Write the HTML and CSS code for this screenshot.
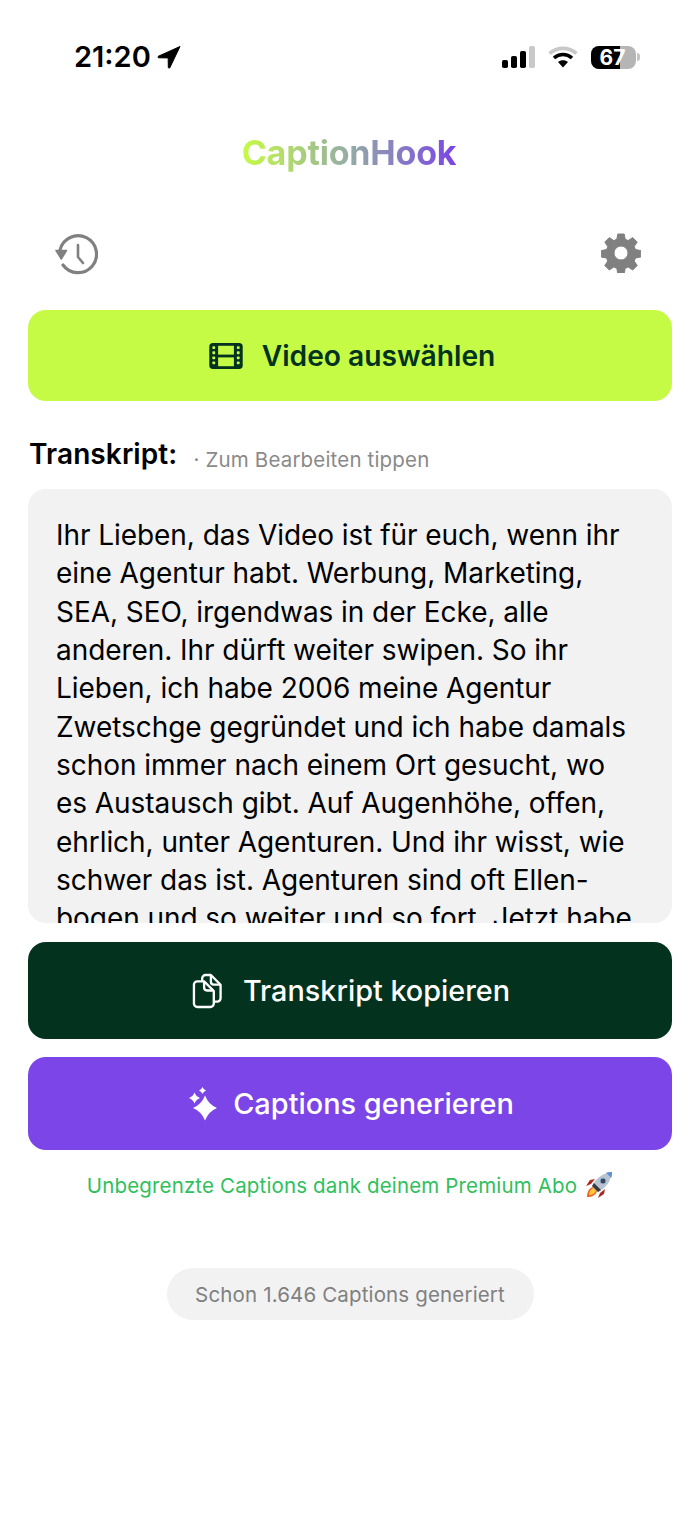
FILE: index.html
```html
<!DOCTYPE html>
<html lang="de">
<head>
<meta charset="utf-8">
<title>CaptionHook</title>
<link rel="stylesheet" href="styles.css">
</head>
<body>
<div class="status">
  <div class="status-left">
    <span class="time">21:20</span>
    <svg class="loc" viewBox="0 0 24 24"><path d="M23 1.500 1.500 11.200c-.9.4-.6 1.600.3 1.600l9.400.1.1 9.400c0 .9 1.200 1.200 1.600.3L23 1.500z" fill="#000" stroke="#000" stroke-width="1" stroke-linejoin="round"/></svg>
  </div>
  <div class="status-right">
    <svg class="signal" viewBox="0 0 34 22"><rect x="0" y="14" width="6" height="8" rx="1.800" fill="#000"/><rect x="9" y="10" width="6" height="12" rx="1.800" fill="#000"/><rect x="18" y="5" width="6" height="17" rx="1.800" fill="#000"/><rect x="27" y="0" width="6" height="22" rx="1.800" fill="#c9c9c9"/></svg>
    <svg class="wifi" viewBox="0 0 30 22"><path d="M1.500 7.500C9 .6 21 .6 28.500 7.500" fill="none" stroke="#c8c8c8" stroke-width="3.600"/><path d="M6 12c5.200-4.600 12.800-4.600 18 0" fill="none" stroke="#000" stroke-width="3.600"/><path d="M10 16c3-2.300 7-2.300 10 0l-5 5.500z" fill="#000"/></svg>
    <div class="battery">
      <div class="batt-body"><div class="batt-fill"></div><span class="batt-num">67</span></div>
      <div class="batt-cap"></div>
    </div>
  </div>
</div>

<div class="logo-row"><span class="logo">CaptionHook</span></div>

<div class="toolbar">
  <svg class="hist" viewBox="0 0 44 44"><path d="M6 18A18.500 18.500 0 1 1 9 33" fill="none" stroke="#808080" stroke-width="3.200" stroke-linecap="round"/><path d="M2 18.500h10.500l-5.200 8.500z" fill="#808080" stroke="#808080" stroke-linejoin="round" stroke-width="1.500"/><path d="M24 13v12l5 6" fill="none" stroke="#808080" stroke-width="2.600" stroke-linecap="round" stroke-linejoin="round"/></svg>
  <svg class="gear" viewBox="0 0 40 40"><path fill="#808080" fill-rule="evenodd" d="M16.800 1h6.400l1 5.300 3 1.300 4.500-3 4.500 4.500-3 4.500 1.300 3 5.300 1v6.400l-5.300 1-1.300 3 3 4.500-4.500 4.500-4.500-3-3 1.300-1 5.300h-6.400l-1-5.300-3-1.300-4.500 3-4.500-4.500 3-4.500-1.300-3-5.300-1v-6.400l5.300-1 1.300-3-3-4.500 4.500-4.500 4.500 3 3-1.300zM20 13a7 7 0 1 0 0 14 7 7 0 0 0 0-14z" stroke="#808080" stroke-width="1" stroke-linejoin="round"/></svg>
</div>

<button class="btn btn-lime">
  <svg class="film" viewBox="0 0 36 28"><rect x="0" y="0" width="36" height="28" rx="4" fill="#03331f"/><rect x="9.500" y="3" width="17" height="9.500" fill="#c6fb45"/><rect x="9.500" y="15.500" width="17" height="9.500" fill="#c6fb45"/><g fill="#c6fb45"><rect x="3.300" y="3.500" width="3" height="3" rx=".8"/><rect x="3.300" y="9" width="3" height="3" rx=".8"/><rect x="3.300" y="14.500" width="3" height="3" rx=".8"/><rect x="3.300" y="20" width="3" height="3" rx=".8"/><rect x="29.700" y="3.500" width="3" height="3" rx=".8"/><rect x="29.700" y="9" width="3" height="3" rx=".8"/><rect x="29.700" y="14.500" width="3" height="3" rx=".8"/><rect x="29.700" y="20" width="3" height="3" rx=".8"/></g></svg>
  <span>Video auswählen</span>
</button>

<div class="label-row">
  <span class="label">Transkript:</span>
  <span class="hint">· Zum Bearbeiten tippen</span>
</div>

<div class="transcript">
  <p>Ihr Lieben, das Video ist für euch, wenn ihr<br>eine Agentur habt. Werbung, Marketing,<br>SEA, SEO, irgendwas in der Ecke, alle<br>anderen. Ihr dürft weiter swipen. So ihr<br>Lieben, ich habe 2006 meine Agentur<br>Zwetschge gegründet und ich habe damals<br>schon immer nach einem Ort gesucht, wo<br>es Austausch gibt. Auf Augenhöhe, offen,<br>ehrlich, unter Agenturen. Und ihr wisst, wie<br>schwer das ist. Agenturen sind oft Ellen-<br>bogen und so weiter und so fort. Jetzt habe</p>
</div>

<button class="btn btn-dark">
  <svg class="copy" viewBox="0 0 32 36"><path d="M10.500 8V5a3.500 3.500 0 0 1 3.500-3.500h5.500L29.500 11.500v14a3.500 3.500 0 0 1-3.500 3.500h-3" fill="none" stroke="#fff" stroke-width="2.400" stroke-linejoin="round"/><path d="M19.500 2v6.500a3 3 0 0 0 3 3h6.500" fill="none" stroke="#fff" stroke-width="2.400"/><path d="M5.500 8h7l10 10v13a3.500 3.500 0 0 1-3.500 3.500H5.500A3.500 3.500 0 0 1 2 31V11.500A3.500 3.500 0 0 1 5.500 8z" fill="#03331f" stroke="#fff" stroke-width="2.400" stroke-linejoin="round"/><path d="M12.500 8.500v6a3 3 0 0 0 3 3h6.500" fill="none" stroke="#fff" stroke-width="2.400"/></svg>
  <span>Transkript kopieren</span>
</button>

<button class="btn btn-purple">
  <svg class="spark" viewBox="0 0 30 34"><path fill="#fff" d="M15 8.500Q18.500 17.500 27 21Q18.500 24.500 15 33.500Q11.500 24.500 3 21Q11.500 17.500 15 8.500z"/><path fill="#fff" d="M4.500 5.500Q6 9.500 10 11Q6 12.500 4.500 16.500Q3 12.500-1 11Q3 9.500 4.500 5.500z"/><path fill="#fff" d="M12.500 0Q13.300 2.300 16 3.500Q13.300 4.700 12.500 7Q11.700 4.700 9 3.500Q11.700 2.300 12.500 0z"/></svg>
  <span>Captions generieren</span>
</button>

<div class="premium">
  <span>Unbegrenzte Captions dank deinem Premium Abo</span>
  <svg class="rocket" viewBox="0 0 28 28"><path d="M2 26c0-5 2-9 6-10l4 4c-1 4-5 6-10 6z" fill="#f0641e"/><path d="M4 24c0-3 1.500-6 4.500-7l2.500 2.500c-1 3-4 4.500-7 4.500z" fill="#fdc83c"/><path d="M6 13 1 15l4-6 5-1zM15 22l-2 5 6-4 1-5z" fill="#a82a22"/><path d="M7 15C11 7 18 2 27 1c-1 9-6 16-14 20z" fill="#b9c4cf"/><path d="M7 15l6 6 3-2-7-7z" fill="#333b47"/><path d="M21 1.700c1.500-.4 4-.7 6-.7 0 2-.3 4.500-.7 6z" fill="#5b8fd6"/><circle cx="18" cy="10" r="3" fill="#3a4656" stroke="#8fb3de"/></svg>
</div>

<div class="pill-row"><div class="pill">Schon 1.646 Captions generiert</div></div>
</body>
</html>
```
FILE: styles.css
```css
* { box-sizing: border-box; }
html, body { margin: 0; padding: 0; background: #fff; }
body {
  width: 700px;
  height: 1522px;
  overflow: hidden;
  padding: 0 28px;
  font-family: Inter, "Liberation Sans", sans-serif;
  color: #000;
}
.status {
  height: 114px;
  margin: 0 -28px;
  padding: 40px 60px 0 74px;
  display: flex;
  justify-content: space-between;
  align-items: flex-start;
}
.status-left { display: flex; align-items: center; gap: 6px; height: 34px; }
.time { font-size: 29px; font-weight: 600; line-height: 34px; }
.loc { width: 24px; height: 24px; }
.status-right { display: flex; align-items: center; gap: 12px; height: 34px; }
.signal { width: 34px; height: 22px; }
.wifi { width: 30px; height: 22px; }
.battery { display: flex; align-items: center; gap: 1px; margin-left: 1px; }
.batt-body {
  position: relative;
  width: 45px;
  height: 23px;
  border-radius: 8px;
  background: #b5b5b5;
  overflow: hidden;
  display: flex;
  align-items: center;
  justify-content: center;
  padding-right: 2px;
}
.batt-fill { position: absolute; left: 0; top: 0; bottom: 0; width: 29px; background: #000; }
.batt-num { position: relative; color: #fff; font-size: 21px; font-weight: 700; line-height: 1; }
.batt-cap { width: 3px; height: 8px; background: #c4c4c4; border-radius: 0 3px 3px 0; }

.logo-row { display: flex; justify-content: center; height: 78px; align-items: flex-start; padding-right: 2px; }
.logo {
  font-size: 34px;
  font-weight: 700;
  letter-spacing: -.2px;
  height: 60px;
  line-height: 60px;
  margin-top: 9px;
  background: linear-gradient(90deg, #c6fb45 0%, #94aca6 50%, #7a45e6 100%);
  -webkit-background-clip: text;
  background-clip: text;
  color: transparent;
}
.toolbar {
  height: 118px;
  padding: 40px 31px 0 26px;
  display: flex;
  justify-content: space-between;
  align-items: flex-start;
}
.hist { width: 44px; height: 44px; }
.gear { width: 40px; height: 40px; margin-top: 1px; }

.btn {
  width: 100%;
  border: 0;
  border-radius: 18px;
  display: flex;
  align-items: center;
  justify-content: center;
  font-family: inherit;
  font-weight: 500;
  font-size: 29px;
  padding: 0;
}
.btn-lime { height: 91px; padding-left: 4px; background: #c6fb45; color: #03331f; gap: 19px; font-weight: 600; font-size: 28.200px; }
.film { width: 34px; height: 26px; }
.label-row { height: 88px; padding: 18px 1px 0; display: flex; align-items: center; gap: 16px; }
.label { font-size: 28px; font-weight: 600; letter-spacing: .1px; }
.hint { font-size: 20.500px; color: #8a8a8a; margin-top: 10px; letter-spacing: .17px; }
.transcript {
  height: 434px;
  background: #f2f2f2;
  border-radius: 18px;
  overflow: hidden;
  padding: 27px 28px 0;
}
.transcript p { margin: 0; font-size: 28px; letter-spacing: -.06px; line-height: 38.350px; white-space: nowrap; }
.btn-dark { height: 97px; margin-top: 19px; padding-left: 2px; background: #03331f; color: #fff; gap: 20px; font-size: 28.800px; }
.copy { width: 31px; height: 36px; }
.btn-purple { height: 93px; margin-top: 18px; padding-left: 4px; background: #7c45e8; color: #fff; gap: 13px; font-size: 28.900px; }
.spark { width: 30px; height: 34px; overflow: visible; }
.premium {
  height: 70px;
  display: flex;
  align-items: center;
  justify-content: center;
  gap: 8px;
  color: #2fc05c;
  font-size: 20.500px;
  letter-spacing: .15px;
}
.rocket { width: 28px; height: 28px; }
.pill-row { display: flex; justify-content: center; margin-top: 48px; }
.pill {
  width: 367px;
  height: 52px;
  border-radius: 26px;
  background: #f2f2f2;
  color: #808080;
  font-size: 20.500px;
  letter-spacing: .15px;
  display: flex;
  align-items: center;
  justify-content: center;
}
```
